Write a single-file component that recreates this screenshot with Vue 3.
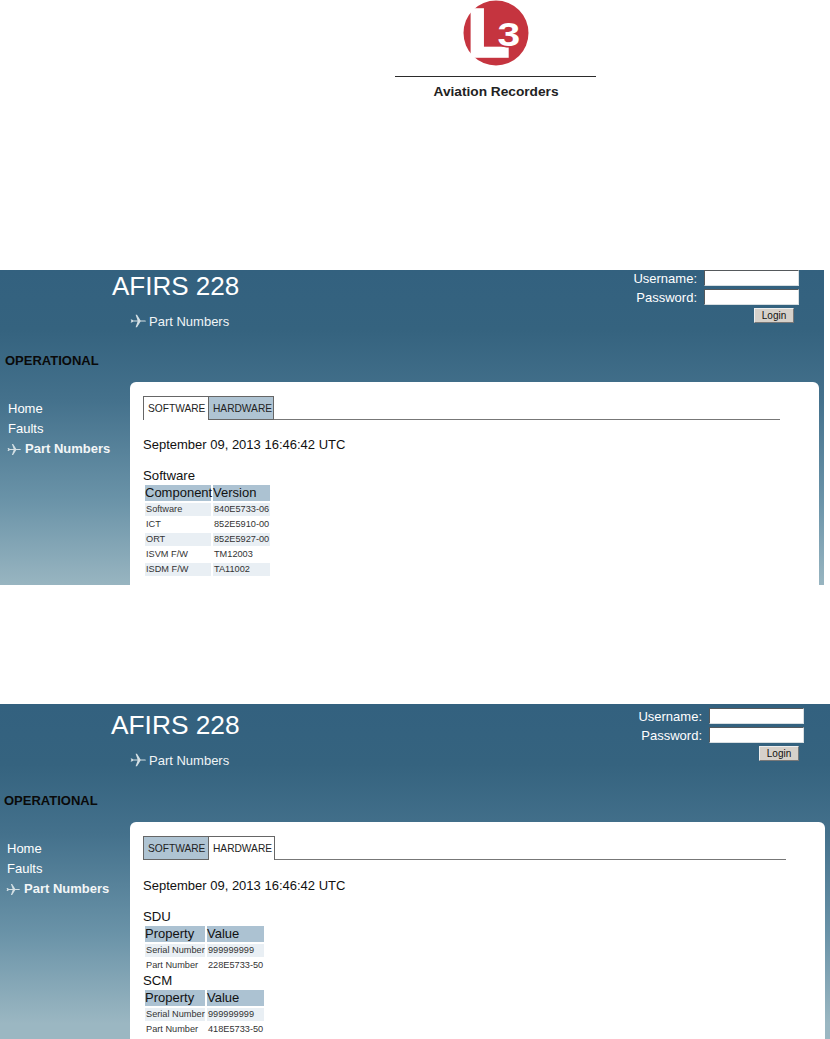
<script setup>
const shots = [
  {
    key: 'a', active: 'SOFTWARE',
    groups: [
      { title: 'Software', cols: ['Component', 'Version'], rows: [
        ['Software', '840E5733-06'], ['ICT', '852E5910-00'], ['ORT', '852E5927-00'],
        ['ISVM F/W', 'TM12003'], ['ISDM F/W', 'TA11002'] ] }
    ]
  },
  {
    key: 'b', active: 'HARDWARE',
    groups: [
      { title: 'SDU', cols: ['Property', 'Value'], rows: [['Serial Number', '999999999'], ['Part Number', '228E5733-50']] },
      { title: 'SCM', cols: ['Property', 'Value'], rows: [['Serial Number', '999999999'], ['Part Number', '418E5733-50']] }
    ]
  }
]
const tabs = ['SOFTWARE', 'HARDWARE']
const plane = 'M0.6 5.4 L1.8 5.4 L3.4 6.4 L7.6 6.4 L5.6 0.8 L7 0.8 L10.6 6.4 L14.4 6.4 C15.4 6.4 16 6.7 16 7 C16 7.3 15.4 7.6 14.4 7.6 L10.6 7.6 L7 13.2 L5.6 13.2 L7.6 7.6 L3.4 7.6 L1.8 8.6 L0.6 8.6 L1.4 7 Z'
</script>

<template>
  <div class="page">
    <header class="brand">
      <svg class="mark" width="70" height="68" viewBox="0 0 70 68" role="img" aria-label="L3">
        <circle cx="35" cy="33" r="32.5" fill="#c5343f" />
        <text class="mark-l" x="7" y="56">L</text>
        <text class="mark-3" transform="translate(36.5 46) scale(1.2 1)" x="0" y="0">3</text>
      </svg>
      <div class="rule"></div>
      <div class="brand-name">Aviation Recorders</div>
    </header>

    <section v-for="s in shots" :key="s.key" class="shot" :class="'shot-' + s.key">
      <div class="top">
        <div class="top-left">
          <h1 class="title">AFIRS 228</h1>
          <div class="crumb">
            <svg class="plane" width="16" height="14" viewBox="0 0 16 14"><path :d="plane" /></svg>
            <span>Part Numbers</span>
          </div>
          <div class="status">OPERATIONAL</div>
        </div>
        <form class="login" @submit.prevent>
          <label class="field"><span>Username:</span><input type="text" /></label>
          <label class="field"><span>Password:</span><input type="password" /></label>
          <button class="btn" type="button">Login</button>
        </form>
      </div>
      <div class="body">
        <nav class="nav">
          <a>Home</a>
          <a>Faults</a>
          <a class="current">
            <svg class="plane" width="14" height="13" viewBox="0 0 16 14"><path :d="plane" /></svg>
            Part Numbers
          </a>
        </nav>
        <main class="panel">
          <div class="tabs">
            <div v-for="t in tabs" :key="t" class="tab" :class="{ on: t === s.active }">{{ t }}</div>
          </div>
          <p class="date">September 09, 2013 16:46:42 UTC</p>
          <div class="groups">
            <div v-for="g in s.groups" :key="g.title" class="group">
              <h2>{{ g.title }}</h2>
              <table>
                <thead><tr><th v-for="c in g.cols" :key="c">{{ c }}</th></tr></thead>
                <tbody>
                  <tr v-for="r in g.rows" :key="r[0]"><td>{{ r[0] }}</td><td>{{ r[1] }}</td></tr>
                </tbody>
              </table>
            </div>
          </div>
        </main>
      </div>
    </section>
  </div>
</template>

<style>
html, body { background: #fff; }
</style>

<style scoped>
.page {
  width: 830px;
  height: 1039px;
  overflow: hidden;
  font-family: "Liberation Sans", Arial, sans-serif;
  background: #fff;
}
.brand {
  height: 270px;
  display: flex;
  flex-direction: column;
  align-items: center;
  padding-left: 162px;
  box-sizing: border-box;
}
.mark { display: block; }
.mark-l { font: 700 67px "Liberation Sans", Arial, sans-serif; fill: #fff; stroke: #fff; stroke-width: 3.6px; }
.mark-3 { font: 700 34px "Liberation Sans", Arial, sans-serif; fill: #fff; stroke: #c5343f; stroke-width: 3px; paint-order: stroke; }
.rule { width: 201px; height: 1px; background: #2b2b2b; margin: 8px 0 0 -2px; }
.brand-name { font-size: 13.7px; font-weight: 700; color: #222; margin-top: 7px; line-height: 15px; }

.shot {
  overflow: hidden;
  background: linear-gradient(180deg, #33617f 0, #35637f 60px, #44718c 130px, #6a93a8 230px, #9bb7c2 320px);
}
.shot-a { width: 824px; height: 315px; margin-bottom: 119px; }
.shot-b { width: 830px; height: 335px; }

.top { display: flex; justify-content: space-between; height: 112px; }
.shot-b .top { height: 118px; }
.title { margin: 1px 0 0 112px; font-size: 26px; line-height: 30px; font-weight: 400; color: #fff; }
.shot-b .title { margin-top: 6px; margin-left: 111px; font-size: 26.3px; }
.crumb {
  display: flex; align-items: center; gap: 3px;
  margin: 12px 0 0 130px;
  height: 16px; color: #f0f4f6; font-size: 13px;
}
.plane { fill: #d3dfe4; flex: none; }
.status { margin: 24px 0 0 5px; font-size: 13px; line-height: 16px; font-weight: 700; color: #0a0a0a; }
.shot-b .status { margin-left: 4px; margin-top: 25px; }

.login { display: flex; flex-direction: column; align-items: flex-end; gap: 3px; padding-right: 25px; }
.shot-b .login { padding-top: 4px; padding-right: 26px; }
.field { display: flex; align-items: center; gap: 7px; color: #fff; font-size: 13px; height: 16px; }
.field input {
  width: 95px; height: 16px; box-sizing: border-box; padding: 0; background: #fff;
  border: 1px solid; border-color: #55595c #d8dfe2 #d8dfe2 #55595c; border-radius: 0; outline: none;
}
.btn {
  margin: 0 5px 0 0; width: 40px; height: 15px; padding: 0;
  font: 10px "Liberation Sans", Arial, sans-serif; color: #111;
  background: #d6d1ca; border: 1px solid; border-color: #eee #777 #777 #eee; border-radius: 0;
}
.shot-b .btn { margin-top: 0; }

.body { display: grid; grid-template-columns: 130px 1fr; }
.nav { display: flex; flex-direction: column; padding: 19px 0 0 8px; font-size: 13px; color: #fff; }
.shot-b .nav { padding-left: 7px; }
.nav a { height: 20px; line-height: 16px; display: flex; align-items: flex-start; gap: 4px; }
.nav .current { font-weight: 700; margin-left: -1px; color: #f3f6f7; }
.nav .current .plane { margin-top: 2px; }

.panel {
  margin-right: 5px;
  height: 300px;
  padding: 14px 39px 0 13px;
  background: #fff;
  border-radius: 6px;
  color: #111;
}
.tabs { display: flex; align-items: flex-end; height: 24px; box-sizing: border-box; border-bottom: 1px solid #777; }
.tab {
  height: 24px; box-sizing: border-box; padding: 0 0 0 4px; line-height: 23px; font-size: 10.2px; color: #222;
  border: 1px solid #666; background: #afc4d3; flex: none; margin-bottom: -1px; white-space: nowrap;
}
.tab:first-child { width: 66px; }
.tab:last-child { width: 65px; border-left: 0; }
.shot-b .tab:last-child { width: 66px; }
.tab.on { background: #fff; border-bottom: 0; }
.date { margin: 17px 0 0; font-size: 13px; line-height: 16px; }
.shot-b .date { margin-top: 18px; }
.groups { margin-top: 16px; }
.group h2 { margin: 0; font-size: 13.2px; line-height: 14px; font-weight: 400; }
.group table { border-collapse: separate; border-spacing: 2px; margin: 0; table-layout: fixed; width: 129px; }
.shot-b .group table { width: 123px; }
th { height: 16px; padding: 0; text-align: left; font-size: 13px; font-weight: 400; background: #acc2d2; color: #111; line-height: 16px; white-space: nowrap; overflow: visible; box-sizing: border-box; }
td { height: 13px; padding: 0 0 0 1px; font-size: 9.2px; line-height: 13px; color: #333; white-space: nowrap; overflow: visible; box-sizing: border-box; }
th:first-child, td:first-child { width: 66px; }
.shot-b th:first-child, .shot-b td:first-child { width: 60px; }
tbody tr:nth-child(odd) td { background: #e9eff4; }
</style>
